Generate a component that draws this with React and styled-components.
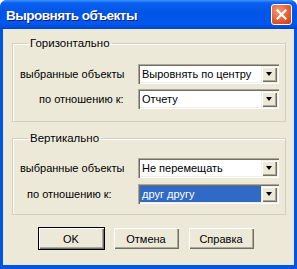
import React from 'react'
import styled, { createGlobalStyle } from 'styled-components'

const Global = createGlobalStyle`
  html, body { margin:0; padding:0; background:#fff; }
  body { font-family:"Liberation Sans", Arial, sans-serif; font-size:11px; }
`

const Window = styled.div`
  width:297px;
  height:269px;
  display:flex;
  flex-direction:column;
  background:#0055E5;
  border-radius:7px 7px 0 0;
  overflow:hidden;
`

const TitleBar = styled.div`
  height:29px;
  flex:none;
  display:flex;
  align-items:center;
  padding:0 5px 0 6px;
  background:linear-gradient(to bottom,#3D95FF 0%,#0A5FEF 10%,#0055E5 45%,#0058EE 80%,#0050DF 92%,#0043C4 100%);
`

const Title = styled.div`
  flex:1;
  color:#fff;
  font-family:"Liberation Sans", Arial, sans-serif;
  font-weight:bold;
  font-size:13.5px;
  letter-spacing:-0.5px;
  text-shadow:1px 1px 0 #0A1E86;
  padding-top:1px;
`

const CloseButton = styled.div`
  width:21px;
  height:21px;
  box-sizing:border-box;
  border:1px solid #fff;
  border-radius:3px;
  background:radial-gradient(circle at 35% 30%,#F29A7A 0%,#E45E32 55%,#C63D10 100%);
  display:flex;
  align-items:center;
  justify-content:center;
`

const Body = styled.div`
  flex:1;
  margin:0 3px 4px 3px;
  background:#ECE9D8;
  padding:8px 8px 0 9px;
  display:flex;
  flex-direction:column;
`

const Group = styled.fieldset`
  margin:0 0 ${p => p.$mb}px 0;
  padding:${p => p.$pt}px 6px 0 7px;
  height:${p => p.$h}px;
  box-sizing:border-box;
  border:1px solid #D0D0BF;
  border-radius:0;
  box-shadow:inset 1px 1px 0 #fff;
  display:flex;
  flex-direction:column;
  gap:${p => p.$gap}px;
`

const Legend = styled.legend`
  margin-left:8px;
  padding:0 2px;
  font-size:11.5px;
  color:#000;
`

const Row = styled.div`
  display:flex;
  align-items:center;
`

const Label = styled.div`
  width:118px;
  flex:none;
  box-sizing:border-box;
  padding-left:${p => p.$indent}px;
  color:#000;
  white-space:nowrap;
`

const Combo = styled.div`
  width:141px;
  height:20px;
  box-sizing:border-box;
  padding:2px;
  background:#fff;
  box-shadow:inset 1px 1px 0 #ACA899, inset 2px 2px 0 #716F64, inset -1px -1px 0 #fff, inset -2px -2px 0 #F1EFE2;
  display:flex;
`

const ComboText = styled.div`
  flex:1;
  display:flex;
  align-items:center;
  padding-left:2px;
  background:${p => p.$selected ? '#316AC5' : '#fff'};
  color:${p => p.$selected ? '#fff' : '#000'};
  white-space:nowrap;
  overflow:hidden;
`

const DropButton = styled.div`
  width:16px;
  flex:none;
  box-sizing:border-box;
  background:#ECE9D8;
  box-shadow:inset 1px 1px 0 #F1EFE2, inset 2px 2px 0 #fff, inset -1px -1px 0 #716F64, inset -2px -2px 0 #ACA899;
  display:flex;
  align-items:center;
  justify-content:center;
`

const Arrow = styled.div`
  width:0;
  height:0;
  border-left:3.5px solid transparent;
  border-right:3.5px solid transparent;
  border-top:4px solid #000;
`

const Buttons = styled.div`
  display:flex;
  justify-content:center;
  gap:8px;
  margin-top:12px;
  padding-right:6px;
`

const Button = styled.div`
  width:67px;
  height:23px;
  box-sizing:border-box;
  display:flex;
  align-items:center;
  justify-content:center;
  background:#ECE9D8;
  color:#000;
  border:1px solid ${p => p.$default ? '#000' : 'transparent'};
  box-shadow:inset 1px 1px 0 #fff, inset -1px -1px 0 #716F64, inset -2px -2px 0 #ACA899;
`

const Combobox = ({ value, selected }) => (
  <Combo>
    <ComboText $selected={selected}>{value}</ComboText>
    <DropButton><Arrow /></DropButton>
  </Combo>
)

export default function App() {
  return (
    <>
      <Global />
      <Window>
        <TitleBar>
          <Title>Выровнять объекты</Title>
          <CloseButton>
            <svg width="11" height="11" viewBox="0 0 11 11">
              <path d="M1.5 1.5 L9.5 9.5 M9.5 1.5 L1.5 9.5" stroke="#fff" strokeWidth="2.2" strokeLinecap="square" />
            </svg>
          </CloseButton>
        </TitleBar>
        <Body>
          <Group $h={85} $pt={15} $gap={5} $mb={10}>
            <Legend>Горизонтально</Legend>
            <Row>
              <Label $indent={0}>выбранные объекты</Label>
              <Combobox value="Выровнять по центру" />
            </Row>
            <Row>
              <Label $indent={19}>по отношению к:</Label>
              <Combobox value="Отчету" />
            </Row>
          </Group>
          <Group $h={83} $pt={14} $gap={6} $mb={0}>
            <Legend>Вертикально</Legend>
            <Row>
              <Label $indent={0}>выбранные объекты</Label>
              <Combobox value="Не перемещать" />
            </Row>
            <Row>
              <Label $indent={7}>по отношению к:</Label>
              <Combobox value="друг другу" selected />
            </Row>
          </Group>
          <Buttons>
            <Button $default>OK</Button>
            <Button>Отмена</Button>
            <Button>Справка</Button>
          </Buttons>
        </Body>
      </Window>
    </>
  )
}
